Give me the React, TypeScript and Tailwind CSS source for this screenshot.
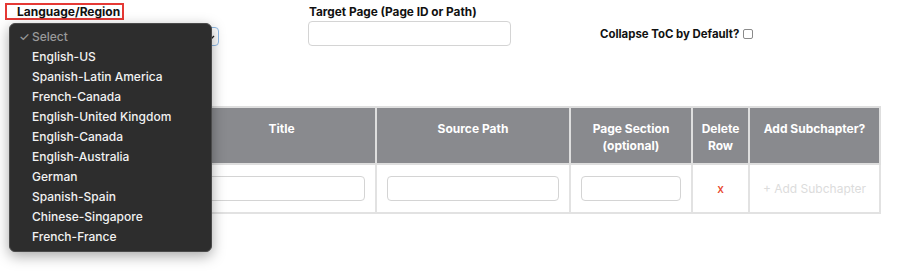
import React from 'react';

const languages = [
    'English-US',
    'Spanish-Latin America',
    'French-Canada',
    'English-United Kingdom',
    'English-Canada',
    'English-Australia',
    'German',
    'Spanish-Spain',
    'Chinese-Singapore',
    'French-France',
];

const LanguageMenu: React.FC = () => (
    <div className="absolute left-[9px] top-[23px] w-[203px] rounded-[6px] bg-[#2d2d2d] border border-[#4a4a4a] shadow-[0_4px_14px_rgba(0,0,0,0.35)] pt-[3px] pb-[4px] z-10">
        <div className="relative h-[20px] leading-[20px] pl-[22px] text-[12px] font-medium text-[#9a9a9a]">
            <span className="absolute left-[9px] top-0">✓</span>
            Select
        </div>
        {languages.map((lang) => (
            <div key={lang} className="h-[20px] leading-[20px] pl-[22px] text-[12px] font-medium text-[#f2f2f2]">
                {lang}
            </div>
        ))}
    </div>
);

export default function App() {
    return (
        <div className="relative w-[900px] h-[280px] bg-white overflow-hidden font-['Inter',sans-serif] text-[12px] text-[#111]">
            <div className="flex pt-[3px] pl-[5px]">
                <div className="w-[303px]">
                    <div className="w-[119px] h-[17px] border-2 border-[#e53935] pl-[10px] leading-[13px] font-bold">
                        Language/Region
                    </div>
                    <div className="ml-[4px] mt-[7px] w-[210px] h-[19px] rounded-[4px] border border-[#8fbbe8] bg-white flex items-center justify-end pr-[3px]">
                        <svg width="8" height="8" viewBox="0 0 8 8">
                            <path d="M1 3 L4 6 L7 3" fill="none" stroke="#222" strokeWidth="1.4" />
                        </svg>
                    </div>
                </div>
                <div className="w-[292px]">
                    <div className="pl-[1px] pt-[2px] leading-[14px] font-bold text-[11.8px]">Target Page (Page ID or Path)</div>
                    <div className="mt-[2px] w-[203px] h-[25px] rounded-[4px] border border-[#d4d4d4] bg-white" />
                </div>
                <div className="pt-[18px] flex items-center gap-[4px]">
                    <span className="font-bold leading-[14px] text-[11.4px]">Collapse ToC by Default?</span>
                    <span className="w-[10px] h-[10px] rounded-[2px] border border-[#8a8a8a] bg-white" />
                </div>
            </div>

            <table className="absolute left-[20px] top-[106px] border-collapse table-fixed">
                <thead>
                    <tr className="bg-[#898a8e] text-white font-bold text-[12px] leading-[17px]">
                        <th className="w-[166px] h-[57px] border-2 border-[#dedede]" />
                        <th className="w-[189px] border-2 border-[#dedede] align-top pt-[12px]">Title</th>
                        <th className="w-[194px] border-2 border-[#dedede] align-top pt-[12px]">Source Path</th>
                        <th className="w-[122px] border-2 border-[#dedede] align-top pt-[12px]">Page Section<br />(optional)</th>
                        <th className="w-[57px] border-2 border-[#dedede] align-top pt-[12px]">Delete<br />Row</th>
                        <th className="w-[131px] border-2 border-[#dedede] align-top pt-[12px]">Add Subchapter?</th>
                    </tr>
                </thead>
                <tbody>
                    <tr>
                        <td className="h-[49px] border-2 border-[#e2e2e2] px-[10px]">
                            <div className="h-[25px] rounded-[4px] border border-[#d4d4d4]" />
                        </td>
                        <td className="border-2 border-[#e2e2e2] pl-[10px] pr-[10px]">
                            <div className="h-[25px] rounded-[4px] border border-[#d4d4d4]" />
                        </td>
                        <td className="border-2 border-[#e2e2e2] px-[10px]">
                            <div className="h-[25px] rounded-[4px] border border-[#d4d4d4]" />
                        </td>
                        <td className="border-2 border-[#e2e2e2] px-[10px]">
                            <div className="h-[25px] rounded-[4px] border border-[#d4d4d4]" />
                        </td>
                        <td className="border-2 border-[#e2e2e2] text-center text-[#e8472b] font-medium">x</td>
                        <td className="border-2 border-[#e2e2e2] text-center text-[#dcdcdc]">+ Add Subchapter</td>
                    </tr>
                </tbody>
            </table>

            <LanguageMenu />
        </div>
    );
}
